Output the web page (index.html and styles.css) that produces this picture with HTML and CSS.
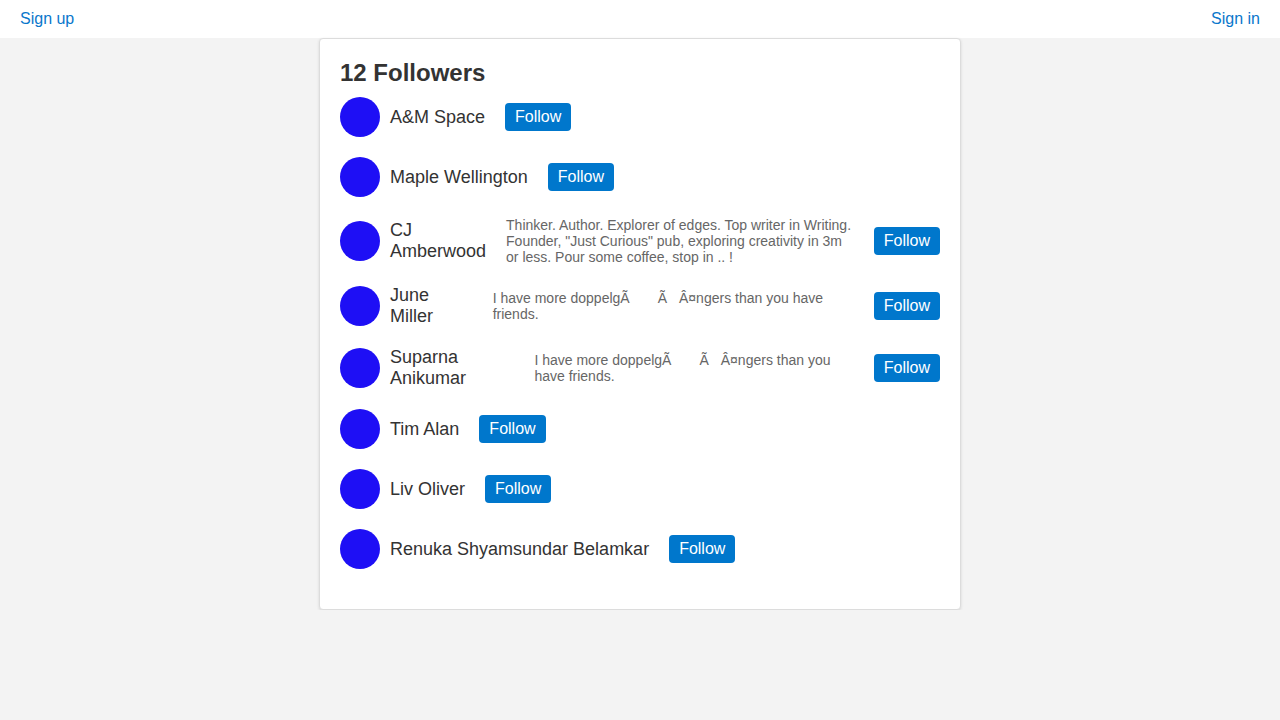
FILE: index.html
```html
<!DOCTYPE html>
<html lang="en">
<head>
<meta charset="utf-8">
<title>12 Followers</title>
<link rel="stylesheet" href="styles.css">
</head>
<body>
<header class="topbar">
  <a class="toplink" href="#">Sign up</a>
  <a class="toplink" href="#">Sign in</a>
</header>
<main class="card">
  <h2 class="title">12 Followers</h2>
  <ul class="list">
    <li class="row">
      <span class="avatar"></span>
      <span class="name">A&amp;M Space</span>
      <button class="follow">Follow</button>
    </li>
    <li class="row">
      <span class="avatar"></span>
      <span class="name">Maple Wellington</span>
      <button class="follow">Follow</button>
    </li>
    <li class="row">
      <span class="avatar"></span>
      <span class="name">CJ Amberwood</span>
      <p class="bio">Thinker. Author. Explorer of edges. Top writer in Writing. Founder, "Just Curious" pub, exploring creativity in 3m or less. Pour some coffee, stop in .. !</p>
      <button class="follow">Follow</button>
    </li>
    <li class="row">
      <span class="avatar"></span>
      <span class="name">June Miller</span>
      <p class="bio">I have more doppelg<span class="mj1">Ã</span><span class="mj2">Ã</span>Â¤ngers than you have friends.</p>
      <button class="follow">Follow</button>
    </li>
    <li class="row">
      <span class="avatar"></span>
      <span class="name">Suparna Anikumar</span>
      <p class="bio">I have more doppelg<span class="mj1">Ã</span><span class="mj2">Ã</span>Â¤ngers than you have friends.</p>
      <button class="follow">Follow</button>
    </li>
    <li class="row">
      <span class="avatar"></span>
      <span class="name">Tim Alan</span>
      <button class="follow">Follow</button>
    </li>
    <li class="row">
      <span class="avatar"></span>
      <span class="name">Liv Oliver</span>
      <button class="follow">Follow</button>
    </li>
    <li class="row">
      <span class="avatar"></span>
      <span class="name">Renuka Shyamsundar Belamkar</span>
      <button class="follow">Follow</button>
    </li>
  </ul>
</main>
</body>
</html>
```
FILE: styles.css
```css
* { box-sizing: border-box; }

html, body {
  margin: 0;
  padding: 0;
}

body {
  background: #f3f3f3;
  font-family: "Liberation Sans", Arial, sans-serif;
  color: #333;
}

.topbar {
  display: flex;
  justify-content: space-between;
  align-items: center;
  height: 38px;
  padding: 0 20px;
  background: #fff;
}

.toplink {
  color: #0a77cc;
  text-decoration: none;
  font-size: 16px;
}

.card {
  width: 642px;
  margin: 0 auto;
  padding: 20px;
  background: #fff;
  border: 1px solid #dcdcdc;
  border-radius: 4px;
  box-shadow: 0 1px 3px rgba(0, 0, 0, 0.12);
}

.title {
  margin: 0 0 10px;
  font-size: 24px;
  font-weight: bold;
  line-height: 28px;
  color: #333;
}

.list {
  list-style: none;
  margin: 0;
  padding: 0;
}

.row {
  display: flex;
  align-items: center;
  margin-bottom: 20px;
}

.avatar {
  flex: 0 0 40px;
  width: 40px;
  height: 40px;
  border-radius: 50%;
  background: #1e0ff5;
}

.name {
  margin-left: 10px;
  font-size: 18px;
  color: #333;
}

.bio {
  margin: 0 0 0 20px;
  font-size: 14px;
  color: #666;
}

.mj1 { margin-right: 28px; }
.mj2 { margin-right: 12px; }

.follow {
  flex-shrink: 0;
  margin-left: 20px;
  padding: 5px 10px;
  border: none;
  border-radius: 4px;
  background: #0077cc;
  color: #fff;
  font-family: "Liberation Sans", Arial, sans-serif;
  font-size: 16px;
  line-height: 18px;
}
```
